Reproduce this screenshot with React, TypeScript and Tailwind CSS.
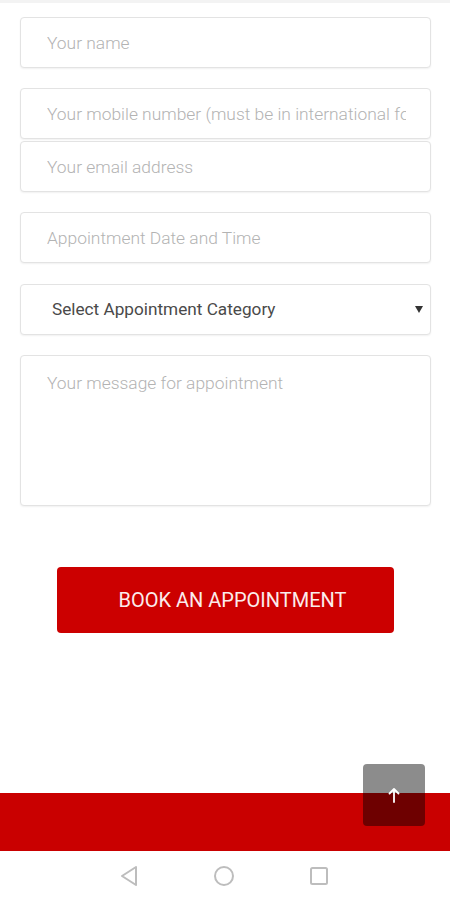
import React from "react";

const inputCls =
  "block w-[411px] h-[51px] rounded-[4px] border border-[#e3e3e3] bg-white pl-[26px] pr-[24px] text-[17.4px] font-light text-[#555] placeholder:text-[#b3b3b3] shadow-[0_1px_2px_rgba(0,0,0,0.06)] outline-none";

export default function App() {
  return (
    <div
      className="relative w-[450px] h-[900px] bg-white overflow-hidden flex flex-col"
      style={{ fontFamily: "Roboto, 'Liberation Sans', sans-serif" }}
    >
      <div className="h-[3px] bg-[#f3f3f3] shrink-0" />
      <div className="flex flex-col pl-[20px] pt-[14px]">
        <input className={inputCls} placeholder="Your name" />
        <input className={inputCls + " mt-[20px]"} placeholder="Your mobile number (must be in international format)" />
        <input className={inputCls + " mt-[2px]"} placeholder="Your email address" />
        <input className={inputCls + " mt-[20px]"} placeholder="Appointment Date and Time" />
        <div className="relative mt-[21px] w-[411px] h-[51px] rounded-[4px] border border-[#e3e3e3] bg-white shadow-[0_1px_2px_rgba(0,0,0,0.06)] flex items-center pl-[31px]">
          <span className="text-[17.2px] text-[#4a4a4a]">Select Appointment Category</span>
          <svg className="absolute right-[7px] top-[21px]" width="8" height="7" viewBox="0 0 8 7">
            <path d="M0 0 L8 0 L4 7 Z" fill="#333" />
          </svg>
        </div>
        <textarea
          className="mt-[20px] block w-[411px] h-[151px] rounded-[4px] border border-[#e3e3e3] bg-white pl-[26px] pr-[24px] pt-[14px] text-[17.4px] font-light text-[#555] placeholder:text-[#b3b3b3] shadow-[0_1px_2px_rgba(0,0,0,0.06)] outline-none resize-none"
          placeholder="Your message for appointment"
        />
        <button className="mt-[61px] ml-[37px] w-[337px] h-[66px] rounded-[4px] bg-[#cc0000] text-[#fbecec] text-[20px] pl-[14px] flex items-center justify-center">
          BOOK AN APPOINTMENT
        </button>
      </div>
      <div className="flex-1" />
      <div className="h-[58px] bg-[#c90000] shrink-0" />
      <div className="h-[49px] bg-white shrink-0 flex items-center justify-between pl-[119px] pr-[121px]">
        <svg width="20" height="22" viewBox="0 0 20 22">
          <path d="M17 2 L3 11 L17 20 Z" fill="none" stroke="#bdbdbd" strokeWidth="2" strokeLinejoin="round" />
        </svg>
        <svg width="22" height="22" viewBox="0 0 22 22">
          <circle cx="11" cy="11" r="9" fill="none" stroke="#bdbdbd" strokeWidth="2" />
        </svg>
        <svg width="20" height="20" viewBox="0 0 20 20">
          <rect x="2" y="2" width="16" height="16" rx="1.5" fill="none" stroke="#bdbdbd" strokeWidth="2" />
        </svg>
      </div>
      <div className="absolute left-[363px] top-[764px] w-[62px] h-[62px] rounded-[4px] bg-black/45 flex items-center justify-center">
        <svg width="12" height="16" viewBox="0 0 12 16">
          <path d="M6 15 L6 2 M1.5 6.5 L6 2 L10.5 6.5" fill="none" stroke="#fff" strokeWidth="1.8" strokeLinecap="round" strokeLinejoin="round" />
        </svg>
      </div>
    </div>
  );
}
